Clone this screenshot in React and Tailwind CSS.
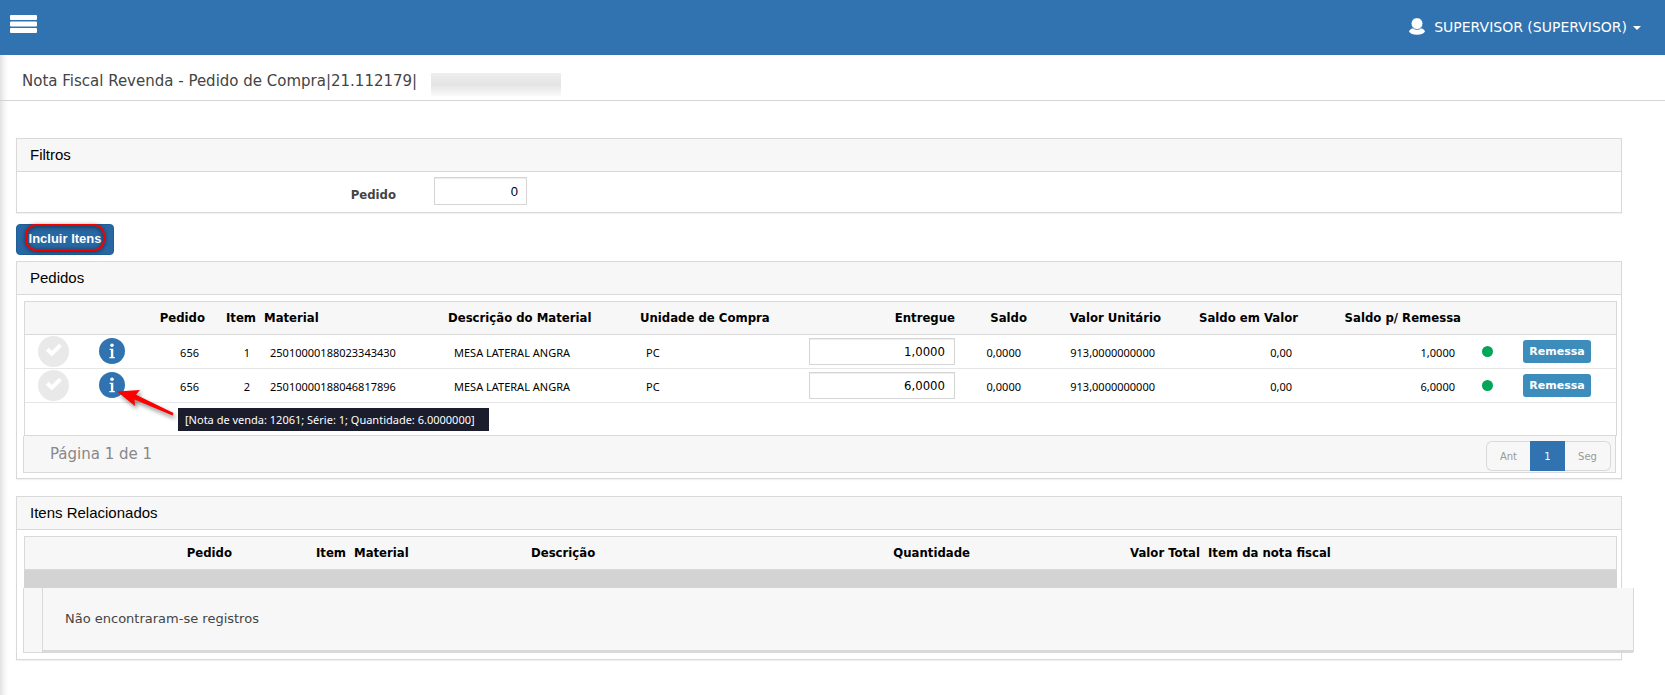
import clsx from 'clsx';

const PEDIDOS_COLUMNS = [
  { label: '', width: 'w-[57px]' },
  { label: '', width: 'w-[60px]' },
  { label: 'Pedido', width: 'w-[67px]', right: true },
  { label: 'Item', width: 'w-[51px]', right: true },
  { label: 'Material', width: 'w-[184px]' },
  { label: 'Descrição do Material', width: '' },
  { label: 'Unidade de Compra', width: 'w-[169px]' },
  { label: 'Entregue', width: 'w-[154px]', right: true },
  { label: 'Saldo', width: 'w-[72px]', right: true },
  { label: 'Valor Unitário', width: 'w-[134px]', right: true },
  { label: 'Saldo em Valor', width: 'w-[137px]', right: true },
  { label: 'Saldo p/ Remessa', width: 'w-[163px]', right: true },
  { label: '', width: 'w-[44px]' },
  { label: '', width: 'w-[107px]' },
];

const ITENS_COLUMNS = [
  { label: 'Pedido', width: 'w-[211px]', right: true },
  { label: 'Item', width: 'w-[114px]', right: true },
  { label: 'Material', width: 'w-[177px]' },
  { label: 'Descrição', width: '' },
  { label: 'Quantidade', width: 'w-[212px]', right: true },
  { label: 'Valor Total', width: 'w-[230px]', right: true },
  { label: 'Item da nota fiscal', width: 'w-[412px]' },
];

const PEDIDOS = [
  {
    pedido: '656',
    item: '1',
    material: '25010000188023343430',
    descricao: 'MESA LATERAL ANGRA',
    unidade: 'PC',
    entregue: '1,0000',
    saldo: '0,0000',
    valorUnitario: '913,0000000000',
    saldoValor: '0,00',
    saldoRemessa: '1,0000',
  },
  {
    pedido: '656',
    item: '2',
    material: '25010000188046817896',
    descricao: 'MESA LATERAL ANGRA',
    unidade: 'PC',
    entregue: '6,0000',
    saldo: '0,0000',
    valorUnitario: '913,0000000000',
    saldoValor: '0,00',
    saldoRemessa: '6,0000',
    tooltip: '[Nota de venda: 12061; Série: 1; Quantidade: 6.0000000]',
  },
];

function MenuIcon() {
  return (
    <svg width="27" height="18" viewBox="0 0 27 18" fill="#fff">
      <rect width="27" height="5" rx="1" />
      <rect y="6.5" width="27" height="5" rx="1" />
      <rect y="13" width="27" height="5" rx="1" />
    </svg>
  );
}

function UserIcon() {
  return (
    <svg width="16" height="17" viewBox="0 0 16 17" className="mb-[3px]">
      <ellipse cx="8" cy="13.300" rx="7.800" ry="3.500" fill="#fff" />
      <circle cx="8" cy="5.600" r="5.900" fill="#fff" stroke="#3073b0" strokeWidth=".8" />
    </svg>
  );
}

function CheckIcon() {
  return (
    <svg width="31" height="31" viewBox="0 0 31 31" className="block mx-auto">
      <circle cx="15.500" cy="15.500" r="15.500" fill="#e9e9e9" />
      <path d="M9.200 13.200l4.600 4.500 8.700-8.600" fill="none" stroke="#fff" strokeWidth="4" />
    </svg>
  );
}

function InfoIcon() {
  return (
    <svg width="26" height="26" viewBox="0 0 26 26" className="block">
      <circle cx="13" cy="13" r="13" fill="#3073b0" />
      <circle cx="13" cy="7.200" r="1.800" fill="#fff" />
      <path d="M10.600 10.700h3.700v8.300h1.500v1.200h-5.400v-1.200h1.500v-7.100h-1.300z" fill="#fff" />
    </svg>
  );
}

function ArrowIcon() {
  return (
    <svg
      width="66"
      height="34"
      viewBox="0 0 66 34"
      className="absolute left-[17px] top-[18px] z-10 drop-shadow-[2px_3px_2px_rgba(0,0,0,0.45)]"
    >
      <path d="M1 1.500L24 0l-4 4.800L57.500 23l-1 2.400L18.500 9.500l.5 6.500z" fill="#f00" />
    </svg>
  );
}

function Panel({ title, className, children }) {
  return (
    <section className={clsx('border border-[#d9d9d9] bg-white shadow-[0_1px_1px_rgba(0,0,0,0.05)]', className)}>
      <h2 className="flex h-[33px] items-center border-b border-[#d9d9d9] bg-[#f7f7f7] px-[13px] font-['Liberation_Sans',sans-serif] text-[15px] text-black">
        {title}
      </h2>
      {children}
    </section>
  );
}

function TableHead({ columns }) {
  return (
    <thead>
      <tr>
        {columns.map((col, i) => (
          <th
            key={i}
            className={clsx(
              'h-[33px] whitespace-nowrap border-b border-[#d9d9d9] bg-[#f7f7f7] px-1 py-0 font-["DejaVu_Sans_Condensed",sans-serif] text-[13px] font-bold leading-4 text-black',
              col.width,
              col.right ? 'text-right' : 'text-left',
            )}
          >
            {col.label}
          </th>
        ))}
      </tr>
    </thead>
  );
}

function Cell({ right, children }) {
  return (
    <td
      className={clsx(
        'h-[34px] border-b border-[#e6e6e6] px-[10px] pt-[2px] pb-0',
        right ? 'text-right' : 'text-left',
      )}
    >
      {children}
    </td>
  );
}

function PedidoRow({ row }) {
  return (
    <tr>
      <td className="h-[34px] border-b border-[#e6e6e6] p-0">
        <CheckIcon />
      </td>
      <td className="border-b border-[#e6e6e6] pb-[2px] pt-0 px-0">
        <div className="relative mx-auto w-[26px]">
          <InfoIcon />
          {row.tooltip && (
            <>
              <ArrowIcon />
              <div
                role="tooltip"
                className="absolute left-[79px] top-9 z-10 h-[23px] min-w-[311px] whitespace-nowrap bg-[#1b1d2c] px-[7px] text-[11px] leading-[23px] text-white"
              >
                {row.tooltip}
              </div>
            </>
          )}
        </div>
      </td>
      <Cell right>{row.pedido}</Cell>
      <Cell right>{row.item}</Cell>
      <Cell>{row.material}</Cell>
      <Cell>{row.descricao}</Cell>
      <Cell>{row.unidade}</Cell>
      <td className="border-b border-[#e6e6e6] px-1 py-0">
        <input
          type="text"
          aria-label={`Entregue ${row.item}`}
          defaultValue={row.entregue}
          className="block h-[27px] w-full border border-[#d5d5d5] bg-white px-[9px] text-right font-['DejaVu_Sans_Condensed',sans-serif] text-[13px] text-black shadow-[inset_0_1px_1px_rgba(0,0,0,0.075)] outline-none"
        />
      </td>
      <Cell right>{row.saldo}</Cell>
      <Cell right>{row.valorUnitario}</Cell>
      <Cell right>{row.saldoValor}</Cell>
      <Cell right>{row.saldoRemessa}</Cell>
      <td className="border-b border-[#e6e6e6] p-0">
        <span className="mx-auto block size-[11px] rounded-full bg-[#00a65a]" />
      </td>
      <td className="border-b border-[#e6e6e6] py-0 pl-[14px] pr-0">
        <button
          type="button"
          className="block h-[23px] w-[68px] rounded-[3px] bg-[#3c8dbc] font-['DejaVu_Sans',sans-serif] text-[11px] font-bold text-white"
        >
          Remessa
        </button>
      </td>
    </tr>
  );
}

export default function App() {
  return (
    <div className="flex min-h-screen flex-col bg-white font-['DejaVu_Sans',sans-serif]">
      {/* Top bar */}
      <header className="flex h-[55px] items-center justify-between bg-[#3073b0] pl-[10px] pr-6">
        <button type="button" aria-label="Menu" className="pb-[7px]">
          <MenuIcon />
        </button>
        <button type="button" className="flex items-center text-[14px] text-white">
          <UserIcon />
          <span className="ml-[9px]">SUPERVISOR (SUPERVISOR)</span>
          <span className="ml-[6px] border-x-4 border-t-4 border-x-transparent border-t-white" />
        </button>
      </header>

      <main className="flex-1 overflow-x-hidden pb-8 shadow-[inset_9px_0_7px_-7px_rgba(0,0,0,0.16)]">
        {/* Page title */}
        <div className="flex h-[46px] items-end border-b border-[#d5d5d5] pb-1 pl-[22px]">
          <h1 className="text-[15px] leading-[30px] text-[#444]">Nota Fiscal Revenda - Pedido de Compra|21.112179|</h1>
          <span className="ml-[14px] h-[23px] w-[130px] bg-linear-to-b from-[#eeeeee] via-[#e4e4e4] to-[#fafafa]" />
        </div>

        <div className="pl-4 pr-[43px] pt-[37px]">
          <Panel title="Filtros">
            <div className="flex h-10 items-start pt-[5px]">
              <label
                htmlFor="pedido"
                className="w-[379px] pt-[6px] text-right font-['DejaVu_Sans_Condensed',sans-serif] text-[13px] font-bold leading-6 text-[#444]"
              >
                Pedido
              </label>
              <input
                id="pedido"
                type="text"
                defaultValue="0"
                className="ml-[38px] h-7 w-[93px] border border-[#d5d5d5] bg-white px-2 text-right font-['Liberation_Sans',sans-serif] text-[13px] text-black shadow-[inset_0_1px_1px_rgba(0,0,0,0.075)] outline-none"
              />
            </div>
          </Panel>

          <div className="relative mt-[11px] w-[98px]">
            <button
              type="button"
              className="block h-[31px] w-full whitespace-nowrap rounded-[4px] border border-[#1f5e97] bg-[#2768a4] pb-[2px] font-['Liberation_Sans',sans-serif] text-[13px] font-bold text-white"
            >
              Incluir Itens
            </button>
            {/* Highlight ring */}
            <span className="pointer-events-none absolute left-[9px] top-0 h-[27px] w-[80px] rounded-[11px] border-2 border-[#f00000] shadow-[0_1px_4px_rgba(0,0,0,0.5),inset_0_1px_5px_rgba(0,0,0,0.5)]" />
          </div>

          <Panel title="Pedidos" className="mt-[6px]">
            <div className="pb-[5px] pl-[6px] pr-1 pt-[6px]">
              <div className="ml-px border border-[#d9d9d9]">
                <table className="w-full table-fixed border-separate border-spacing-0 font-['Noto_Sans',sans-serif] text-[11px] leading-4 text-black">
                  <TableHead columns={PEDIDOS_COLUMNS} />
                  <tbody>
                    {PEDIDOS.map((row) => (
                      <PedidoRow key={row.item} row={row} />
                    ))}
                    <tr>
                      <td colSpan={14} className="h-8 p-0" />
                    </tr>
                  </tbody>
                </table>
              </div>
              <div className="mr-px flex h-[37px] items-center justify-between border border-t-0 border-[#d9d9d9] bg-[#f7f7f7] pl-[26px] pr-1">
                <span className="text-[15px] text-[#888]">Página 1 de 1</span>
                <nav className="mb-px flex h-[30px] self-end text-[10px] text-[#999]">
                  <button type="button" className="w-11 rounded-l-md border border-r-0 border-[#d9d9d9]">
                    Ant
                  </button>
                  <button type="button" className="w-[35px] bg-[#3073b0] text-white">
                    1
                  </button>
                  <button type="button" className="w-[46px] rounded-r-md border border-l-0 border-[#d9d9d9]">
                    Seg
                  </button>
                </nav>
              </div>
            </div>
          </Panel>

          <Panel title="Itens Relacionados" className="mt-[17px]">
            <div className="pb-[6px] pl-[6px] pr-1 pt-[6px]">
              <div className="ml-px border border-b-0 border-[#d9d9d9]">
                <table className="w-full table-fixed border-separate border-spacing-0">
                  <TableHead columns={ITENS_COLUMNS} />
                </table>
              </div>
              <div className="ml-px h-[18px] bg-[#d3d3d3]" />
              <div className="-mr-4 border-b border-l border-[#d9d9d9] bg-[#f7f7f7] pl-[18px]">
                <p className="-mr-px flex h-16 items-center border-b-2 border-l border-r border-[#d9d9d9] bg-[#f7f7f7] pl-[22px] text-[13px] text-[#444]">
                  Não encontraram-se registros
                </p>
              </div>
            </div>
          </Panel>
        </div>
      </main>
    </div>
  );
}
